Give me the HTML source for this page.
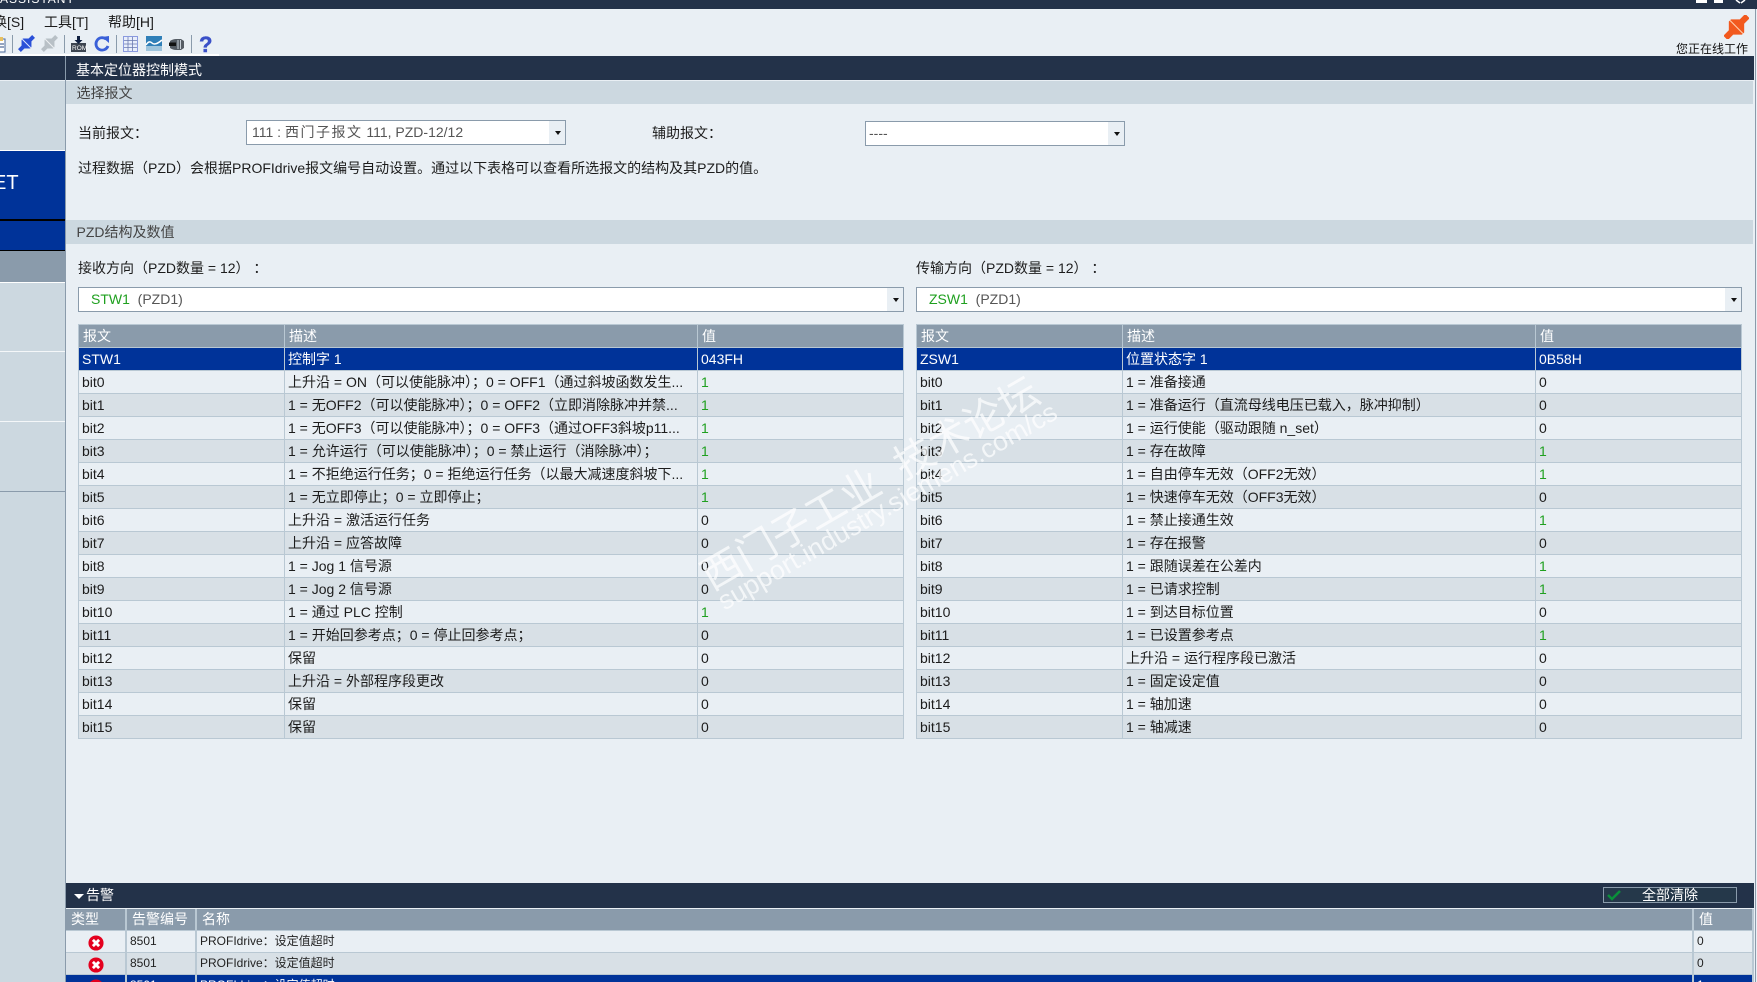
<!DOCTYPE html>
<html lang="zh"><head><meta charset="utf-8"><title>基本定位器控制模式</title>
<style>
html,body{margin:0;padding:0;width:1757px;height:982px;overflow:hidden;background:#e9eff4}
body{position:relative;font:14px/20px "Liberation Sans","WenQuanYi Zen Hei","Noto Sans CJK SC",sans-serif;color:#1c1c1c}
.a{position:absolute;white-space:nowrap}
.dark{background:#233249;color:#fff}
.sec{left:66px;width:1687px;height:23px;background:#ccd8e0;color:#444;line-height:25px;padding-left:10.5px;box-sizing:border-box}
.combo{background:#fff;border:1px solid #8a9bab;box-sizing:border-box;height:25px;line-height:23px;color:#555}
.btn{position:absolute;right:0;top:0;bottom:0;width:16px;background:#e9eff4}
.btn:after{content:"";position:absolute;left:6px;top:10px;border:3px solid transparent;border-top:4px solid #111;border-bottom:0}
.gr{color:#1fa01f}
table.t{position:absolute;top:324px;border-collapse:collapse;table-layout:fixed;font-size:14px}
table.t td,table.t th{height:23px;padding:0 0 0 3px;border:1px solid #b9c8d3;box-sizing:border-box;font-weight:400;text-align:left;white-space:nowrap;overflow:hidden;line-height:21px}
table.t th{background:#8a9bab;color:#fff;padding-left:4px}
table.t tr:nth-child(odd) td{background:#e9eff4}
table.t tr:nth-child(even) td{background:#d8e0e6}
table.t tr.s td{background:#003399;color:#fff}
.side{left:0;width:65px;height:1px}
table.al{position:absolute;left:66px;top:909px;border-collapse:separate;border-spacing:0;table-layout:fixed;font-size:12px}
table.al td,table.al th{box-sizing:border-box;height:22px;padding:0 0 0 3px;border-right:2px solid #b9c8d3;border-bottom:1px solid #b9c8d3;font-weight:400;text-align:left;white-space:nowrap;overflow:hidden;line-height:21px}
table.al th{background:#8a9bab;color:#fff;font-size:14px;padding-left:5px}
table.al td{background:#e9eff4;color:#222}
table.al tr.b td{background:#d8e0e6}
table.al tr.s td{background:#003399;color:#fff}
.x{display:block;margin:2px 0 0 19px}
</style></head><body>

<!-- title bar -->
<div class="a dark" style="left:0;top:0;width:1757px;height:9px;overflow:hidden"><span class="a" style="left:0;top:-11px;font-size:12px;letter-spacing:1px">ASSISTANT</span></div>
<div class="a" style="left:1696px;top:0;width:11px;height:3px;background:#fff"></div>
<div class="a" style="left:1714px;top:0;width:9px;height:3px;background:#fff"></div>
<svg class="a" style="left:1735px;top:0" width="12" height="4"><path d="M1 0l4 3M10 0l-4 3" stroke="#fff" stroke-width="1.5"/></svg>

<!-- menu -->
<div class="a" style="left:-7px;top:11px;line-height:22px">换[S]</div>
<div class="a" style="left:44px;top:11px;line-height:22px">工具[T]</div>
<div class="a" style="left:108px;top:11px;line-height:22px">帮助[H]</div>

<!-- toolbar -->
<div class="a" style="left:0;top:54px;width:219px;height:2px;background:#fff"></div>
<svg class="a" style="left:0;top:34px" width="222" height="20">
<rect x="-6" y="5" width="11" height="13" fill="#fff" stroke="#4a6a9a"/><path d="M-3 3h6v4h-6z" fill="#e8c060"/><path d="M-2 10h6M-2 13h6" stroke="#2a4a80"/>
<path d="M12.500 1v18M64.500 1v18M116.500 1v18M191.500 1v18" stroke="#8a9bab"/>
<g transform="translate(26.500 9.500) rotate(-45)"><path d="M-10-2H-5L-1-6H1L5-2H10V2H5L1 6H-1L-5 2H-10z" fill="#2a50d8"/><path d="M0-6V6" stroke="#dfe6ff"/></g>
<g transform="translate(49.500 9.500) rotate(-45)"><path d="M-10-2H-5L-1-6H1L5-2H10V2H5L1 6H-1L-5 2H-10z" fill="#b8c0c6"/><path d="M0-6V6" stroke="#eef1f3"/></g>
<path d="M71 9h15v9h-15z" fill="#3d4550"/><path d="M78.500 2v5" stroke="#102040" stroke-width="3"/><path d="M74.500 6h8l-4 4z" fill="#102040"/>
<text x="72" y="16" font-size="6.500" fill="#fff" font-family="Liberation Sans">ROM</text>
<path d="M106 5a6.200 6.200 0 1 0 2 7" fill="none" stroke="#3a60d8" stroke-width="2.800"/><path d="M102 3l7-1v7z" fill="#3a60d8"/>
<rect x="123.500" y="2.500" width="14" height="15" fill="#e8eefc" stroke="#8a9adf"/><path d="M124 6.500h13M124 10h13M124 13.500h13M128 3v14M132.500 3v14" stroke="#6a7ab0" stroke-width=".8"/>
<rect x="146" y="2" width="16" height="15" fill="#2f7fb8"/><rect x="146" y="12" width="16" height="5" fill="#9ec4dc"/><path d="M146 11q3-5 6-2t10-3" stroke="#fff" fill="none" stroke-width="1.500"/>
<path d="M170 7q3-2 6-2h5l3 2v7l-3 2h-5q-3 0-6-2z" fill="#555c64"/><rect x="169" y="8.500" width="7" height="3.500" fill="#111"/><path d="M178 6v9M180.500 6v9" stroke="#c8d0d8"/>
<text x="199" y="18" font-size="22" font-weight="700" fill="#3a50c8" stroke="#3a50c8" stroke-width=".5" font-family="Liberation Sans">?</text>
</svg>

<!-- online status -->
<svg class="a" style="left:1724px;top:15px" width="25" height="24"><g transform="translate(12.500 12) rotate(-45) scale(1.55)"><path d="M-10-2H-5L-1-6H1L5-2H10V2H5L1 6H-1L-5 2H-10z" fill="#f2591e"/><path d="M0-6V6" stroke="#ffd0b0" stroke-width=".7"/></g></svg>
<div class="a" style="left:1676px;top:39px;line-height:20px;font-size:12px;color:#111">您正在线工作</div>

<!-- sidebar -->
<div class="a" style="left:0;top:56px;width:65px;height:24px;background:#233249"></div>
<div class="a" style="left:0;top:81px;width:65px;height:901px;background:#ccd8e0"></div>
<div class="a" style="left:65px;top:56px;width:1px;height:926px;background:#8a9bab"></div>
<div class="a side" style="top:150px;background:#fff"></div>
<div class="a" style="left:0;top:151px;width:65px;height:68px;background:#003399"></div>
<div class="a side" style="top:219px;background:#000;height:2px"></div>
<div class="a" style="left:0;top:221px;width:65px;height:29px;background:#003399"></div>
<div class="a side" style="top:250px;background:#000"></div>
<div class="a" style="left:0;top:251px;width:65px;height:31px;background:#8a9bab"></div>
<div class="a side" style="top:282px;background:#fff"></div>
<div class="a side" style="top:351px;background:#f4f7f9"></div>
<div class="a side" style="top:421px;background:#f4f7f9"></div>
<div class="a side" style="top:491px;background:#8a9bab"></div>
<div class="a" style="left:-7px;top:171px;font-size:20px;line-height:24px;color:#fff">ET</div>

<!-- header -->
<div class="a dark" style="left:66px;top:56px;width:1688px;height:24px;line-height:29px;padding-left:10px;box-sizing:border-box">基本定位器控制模式</div>
<div class="a" style="left:1755px;top:9px;width:1px;height:973px;background:#8a9bab"></div>

<div class="a sec" style="top:81px">选择报文</div>
<div class="a" style="left:78px;top:123px">当前报文：</div>
<div class="a combo" style="left:246px;top:120px;width:320px;padding-left:5px">111 : <span style="letter-spacing:1.5px">西门子报文</span> 111, PZD-12/12<span class="btn"></span></div>
<div class="a" style="left:652px;top:123px">辅助报文：</div>
<div class="a combo" style="left:865px;top:121px;width:260px;padding-left:3px">----<span class="btn"></span></div>
<div class="a" style="left:78px;top:158px">过程数据（PZD）会根据PROFIdrive报文编号自动设置。通过以下表格可以查看所选报文的结构及其PZD的值。</div>

<div class="a sec" style="top:220px;height:24px">PZD结构及数值</div>
<div class="a" style="left:78px;top:258px">接收方向（PZD数量 = 12）&nbsp;：</div>
<div class="a" style="left:916px;top:258px">传输方向（PZD数量 = 12）&nbsp;：</div>
<div class="a combo" style="left:78px;top:287px;width:826px;padding-left:12px"><span class="gr">STW1</span>&nbsp; (PZD1)<span class="btn"></span></div>
<div class="a combo" style="left:916px;top:287px;width:826px;padding-left:12px"><span class="gr">ZSW1</span>&nbsp; (PZD1)<span class="btn"></span></div>

<!-- left table -->
<table class="t" style="left:78px;width:825px"><colgroup><col style="width:206px"><col style="width:413px"><col style="width:206px"></colgroup>
<tr><th>报文</th><th>描述</th><th>值</th></tr>
<tr class="s"><td>STW1</td><td>控制字 1</td><td>043FH</td></tr>
<tr><td>bit0</td><td>上升沿 = ON（可以使能脉冲）；0 = OFF1（通过斜坡函数发生...</td><td class="gr">1</td></tr>
<tr><td>bit1</td><td>1 = 无OFF2（可以使能脉冲）；0 = OFF2（立即消除脉冲并禁...</td><td class="gr">1</td></tr>
<tr><td>bit2</td><td>1 = 无OFF3（可以使能脉冲）；0 = OFF3（通过OFF3斜坡p11...</td><td class="gr">1</td></tr>
<tr><td>bit3</td><td>1 = 允许运行（可以使能脉冲）；0 = 禁止运行（消除脉冲）；</td><td class="gr">1</td></tr>
<tr><td>bit4</td><td>1 = 不拒绝运行任务；0 = 拒绝运行任务（以最大减速度斜坡下...</td><td class="gr">1</td></tr>
<tr><td>bit5</td><td>1 = 无立即停止；0 = 立即停止；</td><td class="gr">1</td></tr>
<tr><td>bit6</td><td>上升沿 = 激活运行任务</td><td>0</td></tr>
<tr><td>bit7</td><td>上升沿 = 应答故障</td><td>0</td></tr>
<tr><td>bit8</td><td>1 = Jog 1 信号源</td><td>0</td></tr>
<tr><td>bit9</td><td>1 = Jog 2 信号源</td><td>0</td></tr>
<tr><td>bit10</td><td>1 = 通过 PLC 控制</td><td class="gr">1</td></tr>
<tr><td>bit11</td><td>1 = 开始回参考点；0 = 停止回参考点；</td><td>0</td></tr>
<tr><td>bit12</td><td>保留</td><td>0</td></tr>
<tr><td>bit13</td><td>上升沿 = 外部程序段更改</td><td>0</td></tr>
<tr><td>bit14</td><td>保留</td><td>0</td></tr>
<tr><td>bit15</td><td>保留</td><td>0</td></tr>
</table>

<!-- right table -->
<table class="t" style="left:916px;width:825px"><colgroup><col style="width:206px"><col style="width:413px"><col style="width:206px"></colgroup>
<tr><th>报文</th><th>描述</th><th>值</th></tr>
<tr class="s"><td>ZSW1</td><td>位置状态字 1</td><td>0B58H</td></tr>
<tr><td>bit0</td><td>1 = 准备接通</td><td>0</td></tr>
<tr><td>bit1</td><td>1 = 准备运行（直流母线电压已载入，脉冲抑制）</td><td>0</td></tr>
<tr><td>bit2</td><td>1 = 运行使能（驱动跟随 n_set）</td><td>0</td></tr>
<tr><td>bit3</td><td>1 = 存在故障</td><td class="gr">1</td></tr>
<tr><td>bit4</td><td>1 = 自由停车无效（OFF2无效）</td><td class="gr">1</td></tr>
<tr><td>bit5</td><td>1 = 快速停车无效（OFF3无效）</td><td>0</td></tr>
<tr><td>bit6</td><td>1 = 禁止接通生效</td><td class="gr">1</td></tr>
<tr><td>bit7</td><td>1 = 存在报警</td><td>0</td></tr>
<tr><td>bit8</td><td>1 = 跟随误差在公差内</td><td class="gr">1</td></tr>
<tr><td>bit9</td><td>1 = 已请求控制</td><td class="gr">1</td></tr>
<tr><td>bit10</td><td>1 = 到达目标位置</td><td>0</td></tr>
<tr><td>bit11</td><td>1 = 已设置参考点</td><td class="gr">1</td></tr>
<tr><td>bit12</td><td>上升沿 = 运行程序段已激活</td><td>0</td></tr>
<tr><td>bit13</td><td>1 = 固定设定值</td><td>0</td></tr>
<tr><td>bit14</td><td>1 = 轴加速</td><td>0</td></tr>
<tr><td>bit15</td><td>1 = 轴减速</td><td>0</td></tr>
</table>

<!-- watermark -->
<div class="a" style="left:705px;top:558px;transform-origin:0 50%;transform:rotate(-30deg);font-size:40px;line-height:44px;color:rgba(255,255,255,.7)">西门子工业&nbsp;&nbsp;技术论坛</div>
<div class="a" style="left:720px;top:588px;transform-origin:0 50%;transform:rotate(-30deg);font-size:26.7px;line-height:30px;color:rgba(255,255,255,.7)">support.industry.siemens.com/cs</div>

<!-- alarms -->
<div class="a dark" style="left:66px;top:883px;width:1688px;height:25px;line-height:25px;padding-left:20px;box-sizing:border-box">告警
<span class="a" style="left:8px;top:11px;border:5px solid transparent;border-top:5px solid #fff;border-bottom:0"></span></div>
<div class="a" style="left:1603px;top:887px;width:134px;height:16px;box-sizing:border-box;border:1px solid #8a9bab;background:#25384a;color:#fff;line-height:15px;text-indent:38px">全部清除
<svg class="a" style="left:3px;top:1px" width="14" height="12"><path d="M1 6l4 4 8-8" stroke="#0a8f3a" stroke-width="2.500" fill="none"/></svg></div>

<table class="al" style="width:1688px"><colgroup><col style="width:61px"><col style="width:70px"><col><col style="width:60px"></colgroup>
<tr><th>类型</th><th>告警编号</th><th>名称</th><th>值</th></tr>
<tr><td><svg class="x" width="16" height="16" viewBox="0 0 18 18"><circle cx="9" cy="9" r="8.500" fill="#e4001e"/><path d="M5.500 5.500l7 7M12.500 5.500l-7 7" stroke="#fff" stroke-width="3.200"/></svg></td><td>8501</td><td>PROFIdrive：设定值超时</td><td>0</td></tr>
<tr class="b"><td><svg class="x" width="16" height="16" viewBox="0 0 18 18"><circle cx="9" cy="9" r="8.500" fill="#e4001e"/><path d="M5.500 5.500l7 7M12.500 5.500l-7 7" stroke="#fff" stroke-width="3.200"/></svg></td><td>8501</td><td>PROFIdrive：设定值超时</td><td>0</td></tr>
<tr class="s"><td><svg class="x" width="16" height="16" viewBox="0 0 18 18"><circle cx="9" cy="9" r="8.500" fill="#e4001e"/><path d="M5.500 5.500l7 7M12.500 5.500l-7 7" stroke="#fff" stroke-width="3.200"/></svg></td><td>8501</td><td>PROFIdrive：设定值超时</td><td>1</td></tr>
</table>
</body></html>
